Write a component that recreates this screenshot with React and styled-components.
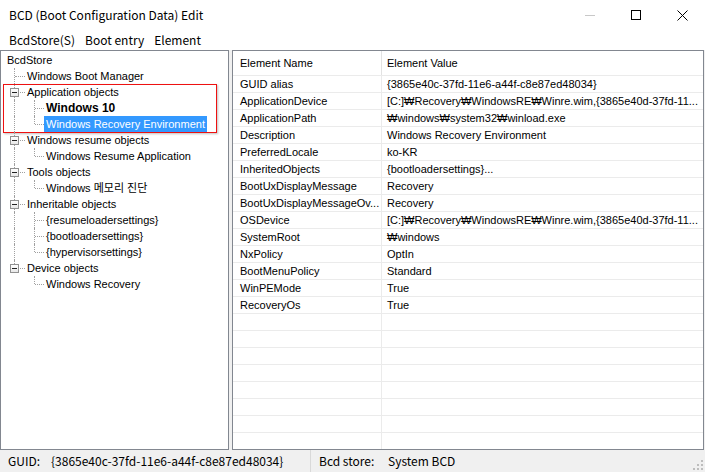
import React from 'react'
import styled, { createGlobalStyle } from 'styled-components'

const GlobalStyle = createGlobalStyle`
    html, body {
        margin: 0;
        padding: 0;
        background: #fff;
    }
    body {
        width: 705px;
        height: 472px;
        overflow: hidden;
    }
`

const Window = styled.div`
    width: 705px;
    height: 472px;
    display: flex;
    flex-direction: column;
    background: #fff;
    color: #000;
    font-family: "Noto Sans CJK KR", "Noto Sans", sans-serif;
    font-size: 12px;
`

const TitleBar = styled.div`
    height: 30px;
    display: flex;
    align-items: center;
    padding-left: 9px;
    line-height: 16px;
`

const Title = styled.div`
    flex: 1;
`

const Controls = styled.div`
    display: flex;
    height: 30px;
`

const CtrlButton = styled.div`
    width: 46px;
    height: 30px;
    display: flex;
    align-items: center;
    justify-content: center;
`

const MenuBar = styled.div`
    height: 20px;
    display: flex;
    align-items: center;
    padding-left: 4px;
    line-height: 16px;
`

const MenuItem = styled.div`
    padding: 0 5px;
`

const Main = styled.div`
    flex: 1;
    display: flex;
    gap: 3px;
    background: #f0f0f0;
    padding-right: 1px;
    min-height: 0;
`

const TreePanel = styled.div`
    width: 229px;
    box-sizing: border-box;
    border: 1px solid #828790;
    background: #fff;
    padding: 1px 0 0 4px;
    font-family: "Liberation Sans", "Noto Sans CJK KR", sans-serif;
    font-size: 11px;
    overflow: hidden;
`

const TreeRow = styled.div`
    display: flex;
    height: 16px;
    align-items: stretch;
`

const Cell = styled.div`
    position: relative;
    width: ${({ $first }) => ($first ? '20px' : '19px')};
    flex: none;

    &::before {
        content: '';
        position: absolute;
        left: 9px;
        top: 0;
        height: ${({ $kind }) =>
            $kind === 'corner' ? '8px' : $kind === 'blank' ? '0' : '16px'};
        border-left: ${({ $kind }) =>
            $kind === 'blank' ? 'none' : '1px dotted #a0a0a0'};
    }

    &::after {
        content: '';
        position: absolute;
        left: 10px;
        right: 0;
        top: 8px;
        border-top: ${({ $kind }) =>
            $kind === 'tee' || $kind === 'corner' ? '1px dotted #a0a0a0' : 'none'};
    }
`

const Expander = styled.div`
    position: absolute;
    left: 5px;
    top: 4px;
    width: 9px;
    height: 9px;
    box-sizing: border-box;
    border: 1px solid #919191;
    background: linear-gradient(#fff, #e8e8e8);
    z-index: 1;

    &::after {
        content: '';
        position: absolute;
        left: 1px;
        top: 3px;
        width: 5px;
        height: 1px;
        background: #222;
    }
`

const Label = styled.div`
    padding: 0 2px;
    line-height: 16px;
    white-space: nowrap;
    font-weight: ${({ $bold }) => ($bold ? 700 : 400)};
    font-size: ${({ $bold }) => ($bold ? '12px' : '11px')};
    background: ${({ $selected }) => ($selected ? '#3399ff' : 'transparent')};
    color: ${({ $selected }) => ($selected ? '#fff' : '#000')};
`

const Highlight = styled.div`
    position: relative;

    &::after {
        content: '';
        position: absolute;
        left: -2px;
        width: 212px;
        top: 0;
        bottom: -1px;
        border: 1px solid #ee1111;
        box-shadow: 1px 1px 2px rgba(0, 0, 0, 0.25);
        pointer-events: none;
    }
`

const GridPanel = styled.div`
    flex: 1;
    box-sizing: border-box;
    border: 1px solid #828790;
    background: #fff;
    font-family: "Liberation Sans", "Noto Sans CJK KR", sans-serif;
    font-size: 11px;
    overflow: hidden;
`

const GridRow = styled.div`
    display: grid;
    grid-template-columns: 149px 1fr;
    height: ${({ $header }) => ($header ? '24px' : '16px')};
    border-bottom: 1px solid #ebebeb;
`

const GridCell = styled.div`
    display: flex;
    align-items: center;
    white-space: nowrap;
    overflow: hidden;
    padding-left: ${({ $first }) => ($first ? '7px' : '5px')};
    border-right: ${({ $first, $header }) =>
        $first ? `1px solid ${$header ? '#e2e2e2' : '#ebebeb'}` : 'none'};
`

const StatusBar = styled.div`
    height: 22px;
    display: flex;
    align-items: stretch;
    background: #f0f0f0;
    line-height: 16px;
    position: relative;
`

const StatusPanel = styled.div`
    display: flex;
    align-items: center;
    width: ${({ $w }) => $w};
    box-sizing: border-box;
    padding-left: 8px;
    border-right: ${({ $sep }) => ($sep ? '1px solid #d9d9d9' : 'none')};
`

const StatusLabel = styled.span`
    width: ${({ $w }) => $w};
    flex: none;
`

const Grip = styled.svg`
    position: absolute;
    right: 2px;
    bottom: 2px;
`

const tree = [
    { label: 'BcdStore', cells: [] },
    { label: 'Windows Boot Manager', cells: ['tee'] },
    { label: 'Application objects', cells: ['tee'], box: true, group: 'start' },
    { label: 'Windows 10', cells: ['pipe', 'tee'], bold: true, group: 'in' },
    { label: 'Windows Recovery Environment', cells: ['pipe', 'corner'], selected: true, group: 'in' },
    { label: 'Windows resume objects', cells: ['tee'], box: true },
    { label: 'Windows Resume Application', cells: ['pipe', 'corner'] },
    { label: 'Tools objects', cells: ['tee'], box: true },
    { label: 'Windows 메모리 진단', cells: ['pipe', 'corner'] },
    { label: 'Inheritable objects', cells: ['tee'], box: true },
    { label: '{resumeloadersettings}', cells: ['pipe', 'tee'] },
    { label: '{bootloadersettings}', cells: ['pipe', 'tee'] },
    { label: '{hypervisorsettings}', cells: ['pipe', 'corner'] },
    { label: 'Device objects', cells: ['corner'], box: true },
    { label: 'Windows Recovery', cells: ['blank', 'corner'] },
]

const elements = [
    ['GUID alias', '{3865e40c-37fd-11e6-a44f-c8e87ed48034}'],
    ['ApplicationDevice', '[C:]₩Recovery₩WindowsRE₩Winre.wim,{3865e40d-37fd-11...'],
    ['ApplicationPath', '₩windows₩system32₩winload.exe'],
    ['Description', 'Windows Recovery Environment'],
    ['PreferredLocale', 'ko-KR'],
    ['InheritedObjects', '{bootloadersettings}...'],
    ['BootUxDisplayMessage', 'Recovery'],
    ['BootUxDisplayMessageOv...', 'Recovery'],
    ['OSDevice', '[C:]₩Recovery₩WindowsRE₩Winre.wim,{3865e40d-37fd-11...'],
    ['SystemRoot', '₩windows'],
    ['NxPolicy', 'OptIn'],
    ['BootMenuPolicy', 'Standard'],
    ['WinPEMode', 'True'],
    ['RecoveryOs', 'True'],
]

const TreeNode = ({ node }) => (
    <TreeRow>
        {node.cells.map((kind, i) => (
            <Cell key={i} $kind={kind} $first={i === 0}>
                {node.box && i === node.cells.length - 1 && <Expander />}
            </Cell>
        ))}
        <Label $bold={node.bold} $selected={node.selected}>
            {node.label}
        </Label>
    </TreeRow>
)

const Tree = () => {
    const before = tree.slice(0, 2)
    const group = tree.filter(n => n.group)
    const after = tree.slice(2 + group.length)
    return (
        <TreePanel>
            {before.map(n => (
                <TreeNode key={n.label} node={n} />
            ))}
            <Highlight>
                {group.map(n => (
                    <TreeNode key={n.label} node={n} />
                ))}
            </Highlight>
            {after.map(n => (
                <TreeNode key={n.label} node={n} />
            ))}
        </TreePanel>
    )
}

const ElementGrid = () => (
    <GridPanel>
        <GridRow $header>
            <GridCell $first $header>Element Name</GridCell>
            <GridCell $header>Element Value</GridCell>
        </GridRow>
        {elements.map(([name, value]) => (
            <GridRow key={name}>
                <GridCell $first>{name}</GridCell>
                <GridCell>{value}</GridCell>
            </GridRow>
        ))}
        {Array.from({ length: 9 }).map((_, i) => (
            <GridRow key={'empty' + i}>
                <GridCell $first />
                <GridCell />
            </GridRow>
        ))}
    </GridPanel>
)

const App = () => (
    <>
        <GlobalStyle />
        <Window>
            <TitleBar>
                <Title>BCD (Boot Configuration Data) Edit</Title>
                <Controls>
                    <CtrlButton>
                        <svg width="10" height="10" viewBox="0 0 10 10">
                            <path d="M0 5.5h10" stroke="#c8c8c8" strokeWidth="1" />
                        </svg>
                    </CtrlButton>
                    <CtrlButton>
                        <svg width="10" height="10" viewBox="0 0 10 10">
                            <rect x="0.5" y="0.5" width="9" height="9" fill="none" stroke="#000" />
                        </svg>
                    </CtrlButton>
                    <CtrlButton>
                        <svg width="11" height="11" viewBox="0 0 11 11">
                            <path d="M0.5 0.5l10 10M10.5 0.5l-10 10" stroke="#000" strokeWidth="1" />
                        </svg>
                    </CtrlButton>
                </Controls>
            </TitleBar>
            <MenuBar>
                <MenuItem>BcdStore(S)</MenuItem>
                <MenuItem>Boot entry</MenuItem>
                <MenuItem>Element</MenuItem>
            </MenuBar>
            <Main>
                <Tree />
                <ElementGrid />
            </Main>
            <StatusBar>
                <StatusPanel $w="311px" $sep>
                    <StatusLabel $w="43px">GUID:</StatusLabel>
                    <span>{'{3865e40c-37fd-11e6-a44f-c8e87ed48034}'}</span>
                </StatusPanel>
                <StatusPanel $w="auto">
                    <StatusLabel $w="69px">Bcd store:</StatusLabel>
                    <span>System BCD</span>
                </StatusPanel>
                <Grip width="10" height="10" viewBox="0 0 10 10">
                    {[[8, 0], [8, 4], [4, 4], [8, 8], [4, 8], [0, 8]].map(([x, y]) => (
                        <rect key={x + '-' + y} x={x} y={y} width="2" height="2" fill="#bdbdbd" />
                    ))}
                </Grip>
            </StatusBar>
        </Window>
    </>
)

export default App
